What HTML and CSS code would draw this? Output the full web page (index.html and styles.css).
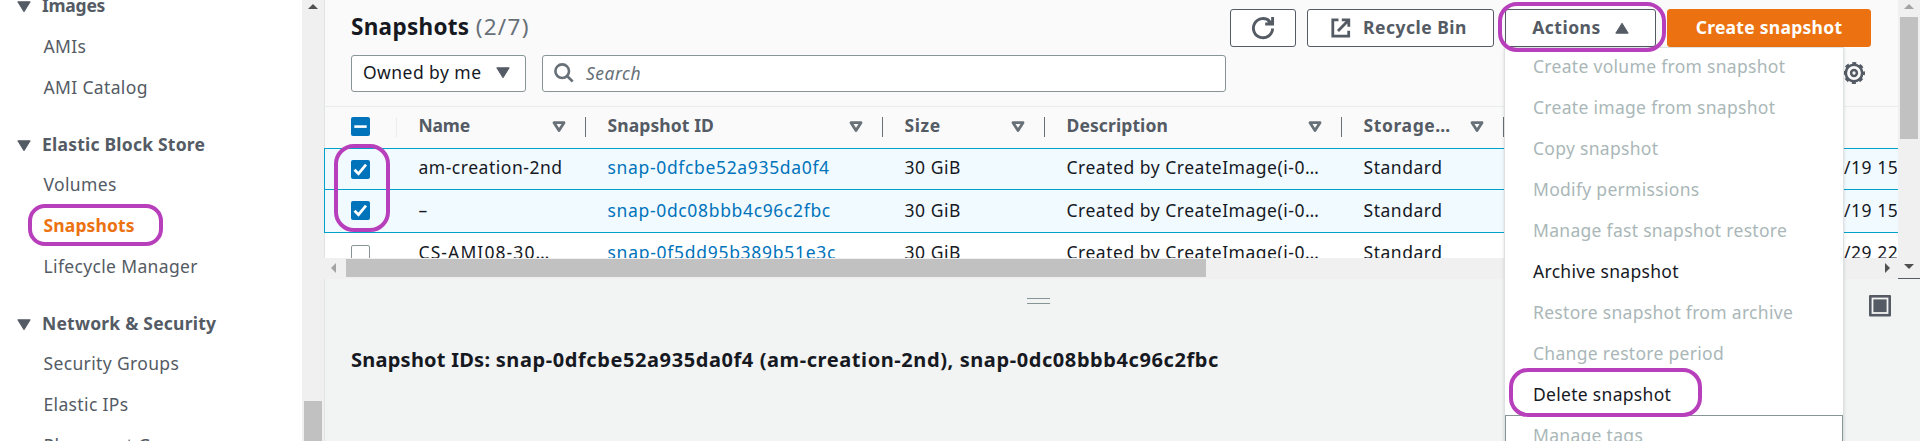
FILE: index.html
```
<!DOCTYPE html>
<html lang="en">
<head>
<meta charset="utf-8">
<title>Snapshots</title>
<link rel="stylesheet" href="styles.css">
</head>
<body>
<svg class="defs" aria-hidden="true">
  <symbol id="sort" viewBox="0 0 14 12"><path d="M2 1.7h10L7 9.6z" fill="none" stroke="#687078" stroke-width="2.8" stroke-linejoin="round"/></symbol>
  <symbol id="down" viewBox="0 0 14 12"><path d="M.8.8h12.4L7 10.8z" fill="#545b64" stroke="#545b64" stroke-linejoin="round"/></symbol>
  <symbol id="check" viewBox="0 0 19 19"><rect width="19" height="19" rx="2" fill="#0073bb"/><path d="M3.5 9.7l4 4 7.5-9" fill="none" stroke="#fff" stroke-width="2.7"/></symbol>
</svg>
<div class="app">
  <nav class="sidebar">
    <section class="group">
      <h2 class="group-title"><svg class="caret"><use href="#down"/></svg><span class="t-images">Images</span></h2>
      <a class="link">AMIs</a>
      <a class="link">AMI Catalog</a>
    </section>
    <section class="group">
      <h2 class="group-title"><svg class="caret"><use href="#down"/></svg>Elastic Block Store</h2>
      <a class="link">Volumes</a>
      <a class="link active">Snapshots<span class="mark mark-nav"></span></a>
      <a class="link">Lifecycle Manager</a>
    </section>
    <section class="group">
      <h2 class="group-title"><svg class="caret"><use href="#down"/></svg>Network &amp; Security</h2>
      <a class="link">Security Groups</a>
      <a class="link">Elastic IPs</a>
      <a class="link">Placement Groups</a>
    </section>
  </nav>
  <div class="nav-scroll"><i class="arrow up dark"></i><i class="thumb"></i></div>
  <main class="main">
    <div class="upper">
      <div class="content">
        <header class="head">
          <div class="title-row">
            <h1 class="title">Snapshots <span class="count">(2/7)</span></h1>
            <div class="actions">
              <button class="btn refresh"><svg width="24" height="24" viewBox="0 0 24 24" fill="none" stroke="#545b64" stroke-width="2.9"><path d="M21.6 12.5A9.6 9.6 0 1 1 18.8 5.4M21.6 1v7h-7.4M17 4.6l4 3"/></svg></button>
              <button class="btn recycle"><svg width="20" height="20" viewBox="0 0 20 20" fill="none" stroke="#545b64" stroke-width="2.8"><path d="M7.5 1.8H1.8v16.4h15.9v-5.4M10.8 1.8h7v6.9M17.5 2.2L7 13"/></svg>Recycle Bin</button>
              <div class="dropdown">
                <button class="btn drop">Actions<svg class="caret flip"><use href="#down"/></svg></button>
                <span class="mark mark-actions"></span>
                <ul class="menu">
                  <li>Create volume from snapshot</li>
                  <li>Create image from snapshot</li>
                  <li>Copy snapshot</li>
                  <li>Modify permissions</li>
                  <li>Manage fast snapshot restore</li>
                  <li class="on">Archive snapshot</li>
                  <li>Restore snapshot from archive</li>
                  <li>Change restore period</li>
                  <li class="on">Delete snapshot<span class="mark mark-delete"></span></li>
                  <li class="focus">Manage tags</li>
                </ul>
              </div>
              <button class="btn primary">Create snapshot</button>
            </div>
          </div>
          <div class="filter-row">
            <div class="select">Owned by me<svg class="caret"><use href="#down"/></svg></div>
            <div class="search"><svg width="20" height="20" viewBox="0 0 20 20" fill="none" stroke="#687078" stroke-width="2.6"><circle cx="8.2" cy="8.2" r="6.8"/><path d="M12.8 12.8l5.9 5.7"/></svg>Search</div>
            <svg class="gear" width="24" height="24" viewBox="-12 -12 24 24" fill="none" stroke="#545b64"><circle r="8.2" stroke-width="2.6"/><circle r="9.7" stroke-width="2.6" stroke-dasharray="4 3.618" stroke-dashoffset="2"/><circle r="2.9" stroke-width="2.5"/></svg>
          </div>
        </header>
        <div class="table">
          <div class="row thead">
            <div class="cell pick"><svg width="19" height="19" viewBox="0 0 19 19"><rect width="19" height="19" rx="2" fill="#0073bb"/><path d="M3.3 9.6h12.4" stroke="#fff" stroke-width="2.6"/></svg></div>
            <div class="cell"><span class="t-name">Name</span><svg class="caret"><use href="#sort"/></svg></div>
            <div class="cell">Snapshot ID<svg class="caret"><use href="#sort"/></svg></div>
            <div class="cell"><span class="wide">Size</span><svg class="caret"><use href="#sort"/></svg></div>
            <div class="cell">Description<svg class="caret"><use href="#sort"/></svg></div>
            <div class="cell"><span class="wide">Storage…</span><svg class="caret"><use href="#sort"/></svg></div>
            <div class="cell"></div>
          </div>
          <div class="row picked first">
            <div class="cell pick"><svg width="19" height="19"><use href="#check"/></svg><span class="mark mark-checks"></span></div>
            <div class="cell">am-creation-2nd</div><div class="cell id">snap-0dfcbe52a935da0f4</div><div class="cell">30 GiB</div><div class="cell">Created by CreateImage(i-0…</div><div class="cell">Standard</div><div class="cell date">/19 15</div>
          </div>
          <div class="row picked">
            <div class="cell pick"><svg width="19" height="19"><use href="#check"/></svg></div>
            <div class="cell">–</div><div class="cell id">snap-0dc08bbb4c96c2fbc</div><div class="cell">30 GiB</div><div class="cell">Created by CreateImage(i-0…</div><div class="cell">Standard</div><div class="cell date">/19 15</div>
          </div>
          <div class="row last">
            <div class="cell pick"><span class="box"></span></div>
            <div class="cell ami">CS-AMI08-30…</div><div class="cell id id-wide">snap-0f5dd95b389b51e3c</div><div class="cell">30 GiB</div><div class="cell">Created by CreateImage(i-0…</div><div class="cell">Standard</div><div class="cell date">/29 22</div>
          </div>
        </div>
        <div class="h-scroll"><i class="arrow left"></i><i class="thumb"></i><i class="arrow right dark"></i></div>
      </div>
      <div class="v-scroll"><i class="arrow up"></i><i class="thumb"></i><i class="arrow down dark"></i></div>
    </div>
    <section class="panel">
      <div class="panel-bar"><i class="handle"></i><svg width="22" height="22" viewBox="0 0 22 22"><rect width="22" height="21.5" rx="1" fill="#545b64"/><rect x="3.5" y="3.5" width="15" height="14.5" fill="#545b64" stroke="#f2f3f3" stroke-width="1.8"/></svg></div>
      <h2 class="panel-title"><span class="label">Snapshot IDs: </span>snap-0dfcbe52a935da0f4 (am-creation-2nd), snap-0dc08bbb4c96c2fbc</h2>
    </section>
  </main>
</div>
</body>
</html>
```
FILE: styles.css
```
* { box-sizing: border-box; }
body {
  margin: 0;
  height: 441px;
  overflow: hidden;
  background: #fff;
  color: #16191f;
  font: 17.5px/41px "Noto Sans", sans-serif;
}
h1, h2, ul { margin: 0; padding: 0; font-weight: 700; }
.defs { position: absolute; width: 0; height: 0; }
.app { display: flex; height: 441px; overflow: hidden; }
.caret { width: 14px; height: 12px; flex: none; display: block; }
.flip { transform: scaleY(-1); }

/* Highlight rings laid over the controls */
.mark {
  position: absolute;
  border: 4px solid #b83fbb;
  border-radius: 17px;
  z-index: 5;
  pointer-events: none;
}
.mark-nav { left: 28px; top: -1px; width: 135px; height: 42px; }
.mark-actions { left: -7px; top: -7px; width: 168px; height: 50px; border-radius: 19px; }
.mark-delete { left: 4px; top: -6px; width: 193px; height: 49px; border-radius: 19px; }
.mark-checks { left: 9px; top: -5px; width: 56px; height: 88px; border-radius: 20px; }

/* Sidebar */
.sidebar {
  width: 302px;
  flex: none;
  display: flex;
  flex-direction: column;
  gap: 16px;
  margin-top: -14.6px;
  color: #545b64;
  line-height: 40.75px;
}
.group-title {
  display: flex;
  align-items: center;
  gap: 11px;
  padding-left: 17px;
  font-size: 17.5px;
  letter-spacing: .22px;
}
.group-title .caret { margin-top: 3px; }
.t-images { letter-spacing: -.25px; }
.link { display: block; position: relative; padding-left: 43.5px; height: 40.75px; letter-spacing: .35px; }
.active { color: #ec7211; font-weight: 700; letter-spacing: .13px; }
.nav-scroll { width: 22px; flex: none; background: #f0f0f0; display: flex; flex-direction: column; align-items: center; justify-content: space-between; padding-top: 4px; }
.nav-scroll .thumb { width: 18px; height: 40px; background: #c1c1c1; }

.arrow { width: 0; height: 0; border: 5px solid transparent; }
.arrow.up { border-top: 0; border-bottom-color: #a3a3a3; }
.arrow.down { border-bottom: 0; border-top-color: #a3a3a3; }
.arrow.left { border-left: 0; border-right-color: #a3a3a3; }
.arrow.right { border-right: 0; border-left-color: #a3a3a3; }
.arrow.up.dark { border-bottom-color: #505050; }
.arrow.down.dark { border-top-color: #505050; }
.arrow.right.dark { border-left-color: #505050; }

/* Main column */
.main { flex: 1; min-width: 0; display: flex; flex-direction: column; }
.upper { display: flex; height: 279px; flex: none; }
.content { width: 1574px; flex: none; display: flex; flex-direction: column; }
.head { height: 107px; background: #fafafa; border-bottom: 1px solid #eaeded; border-left: 1px solid #e0e3e4; padding: 9px 27px 0 26px; }
.title-row { display: flex; justify-content: space-between; height: 46px; }
.title { font-size: 22.5px; line-height: 35px; letter-spacing: .3px; }
.count { font-weight: 400; color: #687078; letter-spacing: 1.3px; }
.actions { display: flex; gap: 11px; }
.btn {
  height: 38px;
  border: 1px solid #545b64;
  border-radius: 3px;
  background: #fff;
  color: #545b64;
  font: 700 17.5px/34px "Noto Sans", sans-serif;
  letter-spacing: .5px;
  padding: 0 0 3px;
  display: flex;
  justify-content: center;
  align-items: center;
}
.refresh { width: 66px; }
.refresh svg { margin-top: 2px; }
.recycle { width: 187px; gap: 12px; padding-right: 3px; }
.recycle svg { margin-top: 3px; }
.drop { width: 151px; gap: 14px; }
.drop .caret { margin-top: 2px; }
.primary { width: 204px; background: #ec7211; border-color: #ec7211; color: #fff; letter-spacing: .27px; }
.dropdown { position: relative; }
.menu {
  position: absolute;
  z-index: 3;
  top: 38px;
  left: -1px;
  width: 340px;
  height: 400px;
  list-style: none;
  font-weight: 400;
  color: #aab7b8;
  background: #fff;
  border: 1px solid #dde1e2;
  box-shadow: 0 1px 3px rgba(0, 28, 36, .15);
  letter-spacing: .3px;
}
.menu li { position: relative; height: 41.05px; padding-left: 28px; line-height: 41px; top: -2px; }
.menu .on { color: #16191f; }
.menu .focus { border: 1px solid #879596; padding-left: 27px; line-height: 39px; }

.filter-row { display: flex; gap: 16px; height: 37px; line-height: 34px; }
.select, .search { display: flex; align-items: center; height: 37px; background: #fff; border: 1px solid #879596; border-radius: 3px; }
.select { width: 175px; justify-content: space-between; padding: 0 15px 3px 11px; letter-spacing: .45px; }
.select .caret { margin-top: 2px; }
.search { width: 684px; gap: 12px; padding: 0 0 1px 11px; color: #687078; font-style: italic; letter-spacing: .5px; }
.gear { margin: 6px 5px 0 auto; }

/* Table */
.table { height: 151px; overflow: hidden; background: #fff; }
.row { display: grid; grid-template-columns: 72px 189px 297px 162px 297px 162px 393px; height: 43px; border-left: 1px solid #e0e3e4; }
.cell { padding-left: 21.5px; white-space: nowrap; overflow: hidden; line-height: 40px; letter-spacing: .52px; }
.pick { position: relative; padding: 11px 0 0 26px; letter-spacing: 0; overflow: visible; }
.pick svg { display: block; }
.thead { height: 41px; background: #fafafa; color: #545b64; font-weight: 700; }
.thead .cell { position: relative; display: flex; align-items: center; justify-content: space-between; padding-right: 20px; padding-bottom: 6px; letter-spacing: .1px; }
.thead .caret { margin-top: 5px; }
.thead .pick { padding: 0 0 3px 26px; }
.thead .cell:not(:last-child)::after { content: ""; position: absolute; right: 0; top: 10px; width: 1px; height: 20px; background: #687078; }
.thead .cell.pick::after { background: #eaeded; }
.thead .wide { letter-spacing: .6px; }
.thead .t-name { letter-spacing: -.2px; }
.picked { background: #f1faff; border: solid #00a1c9; border-width: 0 0 1px 1px; }
.picked.first { height: 42px; border-top-width: 1px; }
.first .cell { line-height: 37px; }
.last .cell { line-height: 39px; }
.id { color: #0073bb; letter-spacing: .66px; }
.id-wide { letter-spacing: .72px; }
.ami { letter-spacing: 1.1px; }
.date { padding-left: 340px; }
.box { display: block; width: 19px; height: 19px; border: 1px solid #879596; border-radius: 2px; background: #fff; margin-top: 1px; }

/* Scrollbars */
.h-scroll { height: 21px; flex: none; background: #f0f0f0; display: flex; align-items: center; padding: 0 8px 2px 7px; }
.h-scroll .thumb { width: 860px; height: 18px; background: #c1c1c1; margin: 0 auto 0 10px; }
.v-scroll { width: 22px; background: #f0f0f0; border-bottom: 1px solid #545b64; display: flex; flex-direction: column; align-items: center; padding: 4px 0 9px; }
.v-scroll .thumb { width: 18px; height: 122px; background: #c1c1c1; margin: 8px 0 auto; }

/* Details panel */
.panel { flex: 1; background: #f2f3f3; border-left: 1px solid #e0e3e4; }
.panel-bar { display: flex; padding: 16px 29px 0 702px; justify-content: space-between; }
.handle { width: 23px; height: 6px; margin-top: 3px; border-top: 1px solid #879596; border-bottom: 1px solid #879596; }
.panel-title { font-size: 20px; line-height: 30px; padding: 28px 0 0 26px; letter-spacing: .59px; }
.label { letter-spacing: .24px; }
```
